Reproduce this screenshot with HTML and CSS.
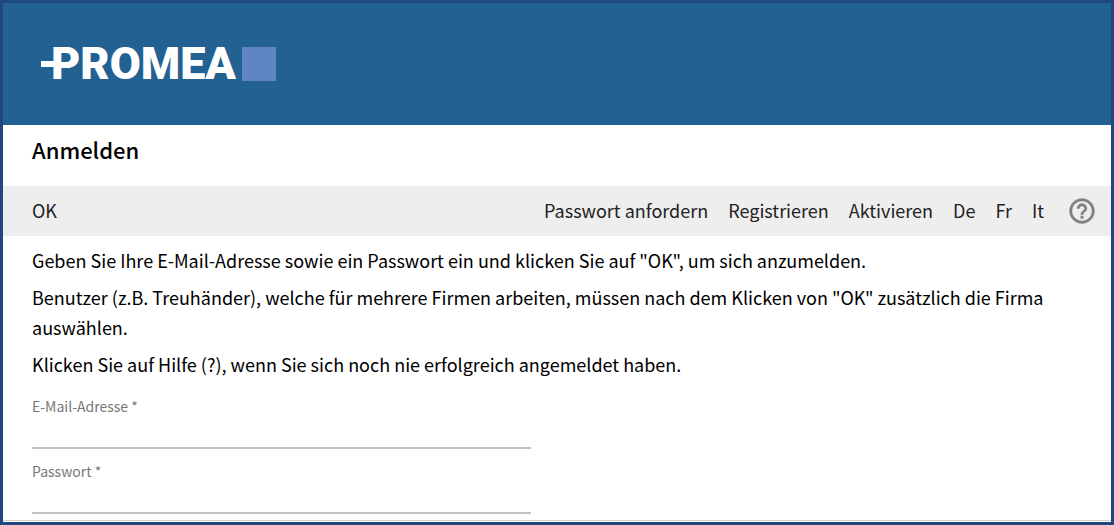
FILE: index.html
```html
<!DOCTYPE html>
<html lang="de">
<head>
<meta charset="utf-8">
<meta name="viewport" content="width=device-width, initial-scale=1">
<title>Anmelden</title>
<link rel="stylesheet" href="styles.css">
</head>
<body>
<div class="page">
  <header class="banner">
    <a class="logo" href="#" aria-label="PROMEA">
      <span class="logo-bar"></span>
      <span class="logo-text">PROMEA</span>
      <span class="logo-square"></span>
    </a>
  </header>
  <h1 class="title">Anmelden</h1>
  <nav class="toolbar">
    <button class="ok" type="submit" form="login">OK</button>
    <div class="links">
      <a href="#">Passwort anfordern</a>
      <a href="#">Registrieren</a>
      <a href="#">Aktivieren</a>
      <a href="#">De</a>
      <a href="#">Fr</a>
      <a href="#">It</a>
    </div>
    <button class="help" type="button" aria-label="Hilfe">
      <svg viewBox="0 0 24 24"><path fill="currentColor" stroke="currentColor" stroke-width=".3" d="M11 18h2v-2h-2v2zm1-16C6.480 2 2 6.480 2 12s4.480 10 10 10 10-4.480 10-10S17.520 2 12 2zm0 18c-4.410 0-8-3.590-8-8s3.590-8 8-8 8 3.590 8 8-3.590 8-8 8zm0-14c-2.210 0-4 1.790-4 4h2c0-1.100.9-2 2-2s2 .9 2 2c0 2-3 1.750-3 5h2c0-2.250 3-2.500 3-5 0-2.210-1.790-4-4-4z"/></svg>
    </button>
  </nav>
  <main class="content">
    <p>Geben Sie Ihre E-Mail-Adresse sowie ein Passwort ein und klicken Sie auf "OK", um sich anzumelden.</p>
    <p>Benutzer (z.B. Treuhänder), welche für mehrere Firmen arbeiten, müssen nach dem Klicken von "OK" zusätzlich die Firma auswählen.</p>
    <p>Klicken Sie auf Hilfe (?), wenn Sie sich noch nie erfolgreich angemeldet haben.</p>
    <form class="form" id="login">
      <div class="field">
        <label for="email">E-Mail-Adresse *</label>
        <input id="email" type="email" required>
      </div>
      <div class="field">
        <label for="password">Passwort *</label>
        <input id="password" type="password" required>
      </div>
    </form>
  </main>
</div>
</body>
</html>
```
FILE: styles.css
```css
* { box-sizing: border-box; }

body {
  margin: 0;
  padding: 3px;
  font-family: "Noto Sans CJK SC", "Noto Sans", sans-serif;
  font-size: 18px;
  line-height: 30px;
  color: #000;
  background: #1f497d;
}

.page {
  padding-bottom: 7px;
  border-bottom: 1px solid #fff;
  background: #fff;
  box-shadow: inset 0 -1px #d0d0d0;
}

.banner {
  display: flex;
  align-items: center;
  height: 122px;
  padding: 0 38px;
  background: #236192;
}

.logo {
  display: flex;
  align-items: center;
  color: #fff;
  text-decoration: none;
}

.logo-bar {
  width: 14px;
  height: 6px;
  margin-right: -4px;
  background: #fff;
}

.logo-text {
  font-family: Roboto, sans-serif;
  font-size: 45px;
  font-weight: 900;
  line-height: 34px;
}

.logo-square {
  width: 34px;
  height: 34px;
  margin-left: 6px;
  background: #5f86c3;
}

.title {
  margin: 0;
  padding: 9px 29px 21px;
  font-size: 22px;
  font-weight: 500;
  line-height: 31px;
}

.toolbar {
  display: flex;
  align-items: center;
  height: 50px;
  padding: 0 14px 0 29px;
  background: #eee;
}

.ok,
.help {
  padding: 0;
  border: 0;
  background: none;
  font: inherit;
  color: #222;
}

.ok,
.links {
  padding-bottom: 2px;
}

.links {
  display: flex;
  gap: 20px;
  margin-left: auto;
}

.links a {
  color: #222;
  text-decoration: none;
}

.help {
  width: 30px;
  height: 30px;
  margin-left: 23px;
  color: #808080;
}

.help svg {
  display: block;
}

.content {
  padding: 9px 29px 0;
}

.content p {
  margin: 0 0 7px;
}

.form {
  display: flex;
  flex-direction: column;
  gap: 12px;
  width: 50%;
  max-width: 499px;
  padding-top: 10px;
}

.field {
  display: flex;
  flex-direction: column;
}

.field label {
  font-size: 14px;
  line-height: 20px;
  color: #777;
}

.field input {
  height: 33px;
  padding: 0;
  border: 0;
  border-bottom: 2px solid #c2c2c2;
  outline: 0;
  background: none;
  font: inherit;
}
```
